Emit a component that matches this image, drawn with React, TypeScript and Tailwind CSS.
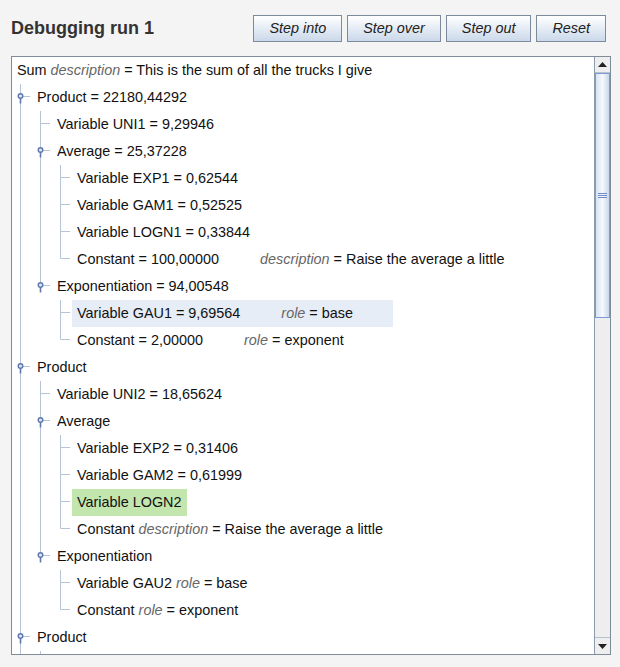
import type { ReactNode } from "react"

type TreeNode = {
     main: string
     attr?: { key: string; value: string; gap?: boolean }
     hl?: "blue" | "green"
     children?: TreeNode[]
}

type Row = {
     node: TreeNode
     level: number
     guides: boolean[]
     last: boolean
     hasKids: boolean
}

const LINE = "#b6c4d6"
const KNOB = "#5f78ad"

const tree: TreeNode = {
     main: "Sum",
     attr: { key: "description", value: "This is the sum of all the trucks I give" },
     children: [
          {
               main: "Product = 22180,44292",
               children: [
                    { main: "Variable UNI1 = 9,29946" },
                    {
                         main: "Average = 25,37228",
                         children: [
                              { main: "Variable EXP1 = 0,62544" },
                              { main: "Variable GAM1 = 0,52525" },
                              { main: "Variable LOGN1 = 0,33844" },
                              { main: "Constant = 100,00000", attr: { key: "description", value: "Raise the average a little", gap: true } },
                         ],
                    },
                    {
                         main: "Exponentiation = 94,00548",
                         children: [
                              { main: "Variable GAU1 = 9,69564", attr: { key: "role", value: "base", gap: true }, hl: "blue" },
                              { main: "Constant = 2,00000", attr: { key: "role", value: "exponent", gap: true } },
                         ],
                    },
               ],
          },
          {
               main: "Product",
               children: [
                    { main: "Variable UNI2 = 18,65624" },
                    {
                         main: "Average",
                         children: [
                              { main: "Variable EXP2 = 0,31406" },
                              { main: "Variable GAM2 = 0,61999" },
                              { main: "Variable LOGN2", hl: "green" },
                              { main: "Constant", attr: { key: "description", value: "Raise the average a little" } },
                         ],
                    },
                    {
                         main: "Exponentiation",
                         children: [
                              { main: "Variable GAU2", attr: { key: "role", value: "base" } },
                              { main: "Constant", attr: { key: "role", value: "exponent" } },
                         ],
                    },
               ],
          },
          // the rest of the tree is scrolled out of view; only the guide stubs show
          { main: "Product", children: [{ main: "" }, { main: "" }] },
          { main: "" },
     ],
}

const flatten = (node: TreeNode, level: number, guides: boolean[], last: boolean, out: Row[]) => {
     const kids = node.children ?? []
     out.push({ node, level, guides, last, hasKids: kids.length > 0 })
     const next = level >= 1 ? [...guides, !last] : guides
     kids.forEach((c, i) => flatten(c, level + 1, next, i === kids.length - 1, out))
     return out
}

const rows = flatten(tree, 0, [], true, []).slice(0, 23)

// --- tree guide drawings ---
const GuideCell = ({ on }: { on: boolean }) => (
     <svg width="20" height="27" className="shrink-0 block">
          {on && <line x1="8.5" y1="0" x2="8.5" y2="27" stroke={LINE} />}
     </svg>
)

const ConnectorCell = ({ last, knob }: { last: boolean; knob: boolean }) => (
     <svg width="20" height="27" className="shrink-0 block">
          <line x1="8.5" y1="0" x2="8.5" y2={last ? 12.5 : 27} stroke={LINE} />
          <line x1="8.5" y1="12.5" x2="18" y2="12.5" stroke={LINE} />
          {knob && (
               <>
                    <line x1="8.5" y1="14" x2="8.5" y2="19.5" stroke={KNOB} strokeWidth="1.6" />
                    <circle cx="8.5" cy="12" r="2.3" fill="#dfe6f2" stroke={KNOB} strokeWidth="1.4" />
               </>
          )}
     </svg>
)

const Label = ({ node }: { node: TreeNode }) => {
     const { main, attr, hl } = node
     let attrEl: ReactNode = null
     if (attr) {
          attrEl = (
               <span className={attr.gap ? "ml-[41px]" : "ml-[4px]"}>
                    <i className="text-[#666]">{attr.key}</i> = {attr.value}
               </span>
          )
     }
     const bg = hl === "blue" ? "bg-[#e6edf7] pr-[40px]" : hl === "green" ? "bg-[#c3e6ae] pr-[5px]" : "pr-[5px]"
     return (
          <div className={`h-full flex items-center pl-[5px] whitespace-nowrap ${bg}`}>
               {main && <span>{main}</span>}
               {attrEl}
          </div>
     )
}

const ScrollBar = () => (
     <div className="w-[16px] shrink-0 flex flex-col border-l border-[#8a9bb0] bg-[#eeeeee]">
          <div className="h-[16px] flex items-center justify-center border-b border-[#b8c2cc] bg-[#eeeeee]">
               <svg width="9" height="5"><polygon points="0,5 4.5,0 9,5" fill="#222" /></svg>
          </div>
          <div className="h-[245px] border border-[#7d9ad8] bg-gradient-to-r from-[#d8e3f2] via-[#f6f9fd] to-[#c9d7ea] flex items-center justify-center">
               <svg width="9" height="6">
                    <line x1="0" y1="0.5" x2="9" y2="0.5" stroke="#6f8cc8" />
                    <line x1="0" y1="2.5" x2="9" y2="2.5" stroke="#6f8cc8" />
                    <line x1="0" y1="4.5" x2="9" y2="4.5" stroke="#6f8cc8" />
               </svg>
          </div>
          <div className="flex-1" />
          <div className="h-[17px] flex items-center justify-center border-t border-[#b8c2cc]">
               <svg width="9" height="5"><polygon points="0,0 4.5,5 9,0" fill="#222" /></svg>
          </div>
     </div>
)

const buttons = ["Step into", "Step over", "Step out", "Reset"]

const App = () => {
     return (
          <div className="w-[620px] h-[667px] bg-[#f4f4f4] font-['Liberation_Sans',Arial,sans-serif] overflow-hidden">
               {/* --- HEADER --- */}
               <div className="flex items-center justify-between pl-[11px] pr-[14px] pt-[15px]">
                    <h1 className="text-[18px] font-bold text-[#333]">Debugging run 1</h1>
                    <div className="flex gap-[5px]">
                         {buttons.map((b) => (
                              <button
                                   key={b}
                                   className="h-[27px] px-[15px] border border-[#7b8b9b] bg-gradient-to-b from-[#ffffff] to-[#cbd9ea] text-[14.4px] italic text-[#222]"
                              >
                                   {b}
                              </button>
                         ))}
                    </div>
               </div>

               {/* --- TREE PANEL --- */}
               <div className="ml-[11px] mt-[14px] w-[600px] h-[599px] border border-[#7f8c99] bg-white flex overflow-hidden">
                    <div className="flex-1 overflow-hidden text-[14.4px] text-[#111]">
                         {rows.map((r, i) => (
                              <div key={i} className="h-[27px] flex items-stretch">
                                   {r.guides.map((g, k) => (
                                        <GuideCell key={k} on={g} />
                                   ))}
                                   {r.level > 0 && <ConnectorCell last={r.last} knob={r.hasKids} />}
                                   <Label node={r.node} />
                              </div>
                         ))}
                    </div>
                    <ScrollBar />
               </div>
          </div>
     )
}

export default App
